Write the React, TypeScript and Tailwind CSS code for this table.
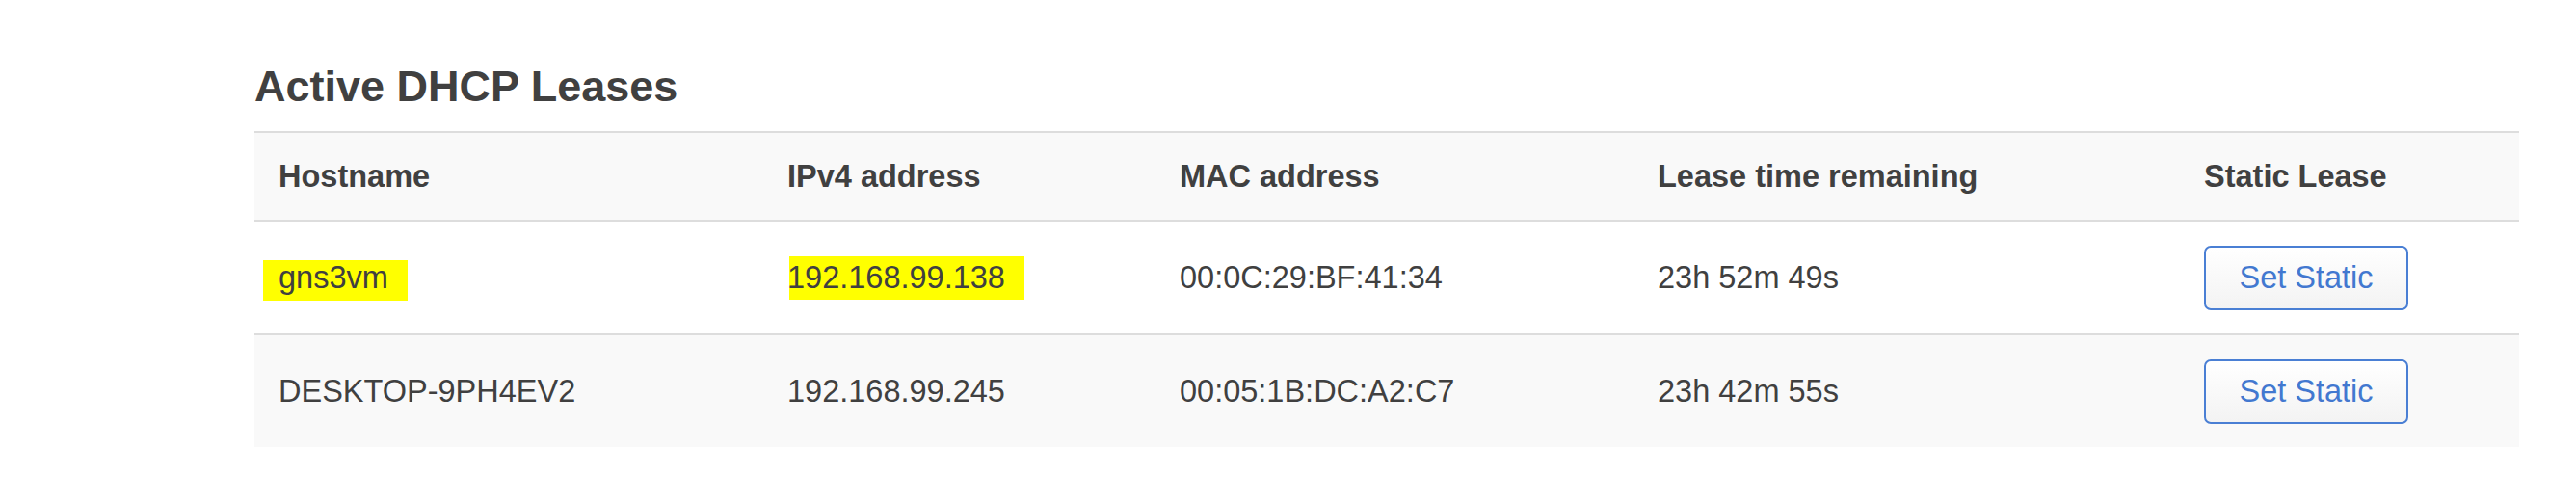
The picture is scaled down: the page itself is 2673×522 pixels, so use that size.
import React from "react";

const cols = "grid grid-cols-[528px_407px_496px_567px_352px]";

function Cell({ children }: { children?: React.ReactNode }) {
  return <div className="flex items-center px-[25px]">{children}</div>;
}

function Highlight({
  children,
  box,
}: {
  children: React.ReactNode;
  box: string;
}) {
  return (
    <span className="relative inline-block">
      <span className={`absolute bg-[#ffff00] ${box}`} />
      <span className="relative">{children}</span>
    </span>
  );
}

function SetStatic() {
  return (
    <button className="flex h-[67px] w-[212px] items-center justify-center rounded-[7px] border-2 border-[#4a7fd4] bg-gradient-to-b from-white to-[#f3f3f3] text-[32.5px] leading-none text-[#4278d0]">
      Set Static
    </button>
  );
}

export default function App() {
  const rows = [
    {
      host: (
        <Highlight box="-left-[16px] -right-[20px] top-0 -bottom-[5px]">
          gns3vm
        </Highlight>
      ),
      ip: (
        <Highlight box="left-[2px] -right-[20px] -top-[4px] -bottom-[4px]">
          192.168.99.138
        </Highlight>
      ),
      mac: "00:0C:29:BF:41:34",
      lease: "23h 52m 49s",
      bg: "bg-white",
    },
    {
      host: "DESKTOP-9PH4EV2",
      ip: "192.168.99.245",
      mac: "00:05:1B:DC:A2:C7",
      lease: "23h 42m 55s",
      bg: "bg-[#f9f9f9]",
    },
  ];

  return (
    <div className="min-h-[522px] w-[2673px] bg-white pl-[264px] font-['Liberation_Sans',Arial,sans-serif] text-[#404040]">
      <h1 className="pt-[64px] text-[45px] font-bold leading-[51px]">
        Active DHCP Leases
      </h1>
      <div className="mt-[21px] w-[2350px] border-t-2 border-[#dddddd]">
        <div
          className={`${cols} h-[90px] bg-[#f9f9f9] text-[32.5px] font-bold leading-[37px]`}
        >
          <Cell>Hostname</Cell>
          <Cell>IPv4 address</Cell>
          <Cell>MAC address</Cell>
          <Cell>Lease time remaining</Cell>
          <Cell>Static Lease</Cell>
        </div>
        {rows.map((r, i) => (
          <div
            key={i}
            className={`${cols} h-[118px] border-t-2 border-[#dddddd] text-[32.5px] leading-[37px] ${r.bg}`}
          >
            <Cell>{r.host}</Cell>
            <Cell>{r.ip}</Cell>
            <Cell>{r.mac}</Cell>
            <Cell>{r.lease}</Cell>
            <Cell>
              <SetStatic />
            </Cell>
          </div>
        ))}
      </div>
    </div>
  );
}
